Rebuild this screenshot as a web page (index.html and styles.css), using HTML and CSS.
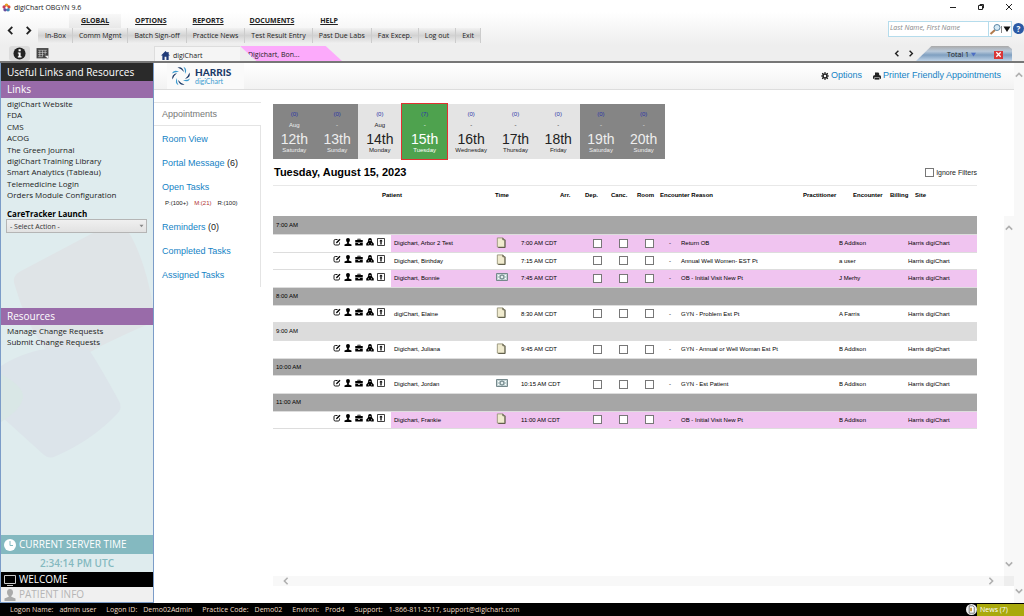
FILE: index.html
```html
<!DOCTYPE html>
<html lang="en">
  <head>
    <meta charset="UTF-8" />
    <meta name="viewport" content="width=device-width, initial-scale=1.0" />
    <title>digiChart OBGYN 9.6</title>
    <link rel="stylesheet" href="styles.css">
  </head>
  <body>
    <svg class="sprites" aria-hidden="true">
      <symbol id="i-edit" viewBox="0 0 16 16">
        <path d="M9 3H4.500Q2 3 2 5.500v6Q2 14 4.500 14h6q2.500 0 2.500-2.500V9" fill="none" stroke="currentColor" stroke-width="1.800" />
        <path d="M6.500 8l6.500-6.500 2 2L8.500 10 6 10.700z" fill="currentColor" />
      </symbol>
      <symbol id="i-person" viewBox="0 0 16 16">
        <path d="M8 0C5.500 0 4 1.800 4.200 4.500 4.400 6.500 5.200 8 6.300 8.800v2L1 13v3h14v-3l-5.300-2.200v-2C10.800 8 11.600 6.500 11.800 4.500 12 1.800 10.500 0 8 0z" fill="currentColor" />
      </symbol>
      <symbol id="i-case" viewBox="0 0 16 16">
        <path d="M5 4V1.500h6V4h4.500v5h-15V4zM6.500 4h3V3h-3zM.500 10H6v1.500h4V10h5.500v5H.500z" fill="currentColor" fill-rule="evenodd" />
      </symbol>
      <symbol id="i-group" viewBox="0 0 16 16">
        <path d="M8 0C5 0 4 2 4.300 6L2.500 9 .500 11v4h6L8 13.500 9.500 15h6v-4l-2-2-1.800-3C12 2 11 0 8 0z" fill="currentColor" />
        <path d="M6.500 4h1v2h-1zM8.500 4h1v2h-1zM4 11h2v1.500H4zM10 11h2v1.500h-2z" fill="#fff" />
      </symbol>
      <symbol id="i-task" viewBox="0 0 16 16">
        <path d="M1 1h14v14H1z" fill="#fff" stroke="currentColor" stroke-width="1.500" />
        <path d="M8 3l3.500 3.500H9.300V13H6.700V6.500H4.500z" fill="currentColor" />
      </symbol>
      <symbol id="i-note" viewBox="0 0 10 12">
        <path d="M1 1h6l2 2v8H1z" fill="#f0ebcf" stroke="#99977c" />
        <path d="M7 1v2h2M9.500 3v8.500H2" fill="none" stroke="#55543f" />
      </symbol>
      <symbol id="i-cash" viewBox="0 0 12 8">
        <path d="M.500 .500h11v7H.500z" fill="#c3d3d4" stroke="#76898c" />
        <path d="M2 2h1v1H2zM9 2h1v1H9zM2 5h1v1H2zM9 5h1v1H9z" fill="#fff" />
        <circle cx="6" cy="4" r="2" fill="#e6efef" stroke="#60777b" />
      </symbol>
      <symbol id="i-left" viewBox="0 0 10 10">
        <path d="M7 1L3 5l4 4" fill="none" stroke="currentColor" stroke-width="2" />
      </symbol>
      <symbol id="i-right" viewBox="0 0 10 10">
        <path d="M3 1l4 4-4 4" fill="none" stroke="currentColor" stroke-width="2" />
      </symbol>
      <symbol id="i-up" viewBox="0 0 10 10">
        <path d="M1 7l4-4 4 4" fill="none" stroke="currentColor" stroke-width="2" />
      </symbol>
      <symbol id="i-down" viewBox="0 0 10 10">
        <path d="M1 3l4 4 4-4" fill="none" stroke="currentColor" stroke-width="2" />
      </symbol>
    </svg>

    <header class="top">
      <div class="titlebar">
        <svg class="app-icon" viewBox="0 0 10 10">
          <circle cx="5" cy="2.500" r="2" fill="#e8a427" />
          <circle cx="2.500" cy="4.500" r="2" fill="#c8405c" />
          <circle cx="7.500" cy="4.500" r="2" fill="#d84a35" />
          <circle cx="3.500" cy="7.500" r="2" fill="#6a4b9c" />
          <circle cx="6.700" cy="7.500" r="2" fill="#3f86b8" />
          <circle cx="5" cy="5.200" r="1.300" fill="#fff" />
        </svg>
        <span class="app-name">digiChart OBGYN 9.6</span>
        <div class="window-buttons">
          <button aria-label="Minimize"><svg viewBox="0 0 8 8"><path d="M1 4.500h6" fill="none" stroke="#222" /></svg></button>
          <button aria-label="Restore"><svg viewBox="0 0 8 8"><path d="M1.500 2.500h4v4h-4zM3 2.500v-1h3.500V5H5.500" fill="none" stroke="#222" /></svg></button>
          <button aria-label="Close"><svg viewBox="0 0 8 8"><path d="M1 1l6 6M7 1L1 7" fill="none" stroke="#222" /></svg></button>
        </div>
      </div>

      <div class="ribbon">
        <div class="history">
          <button aria-label="Back"><svg><use href="#i-left" /></svg></button>
          <button aria-label="Forward"><svg><use href="#i-right" /></svg></button>
        </div>
        <div class="menus">
          <nav class="menu-main">
            <a class="active" href="#">GLOBAL</a>
            <a href="#">OPTIONS</a>
            <a href="#">REPORTS</a>
            <a href="#">DOCUMENTS</a>
            <a href="#">HELP</a>
          </nav>
          <nav class="menu-sub">
            <a href="#">In-Box</a>
            <a href="#">Comm Mgmt</a>
            <a href="#">Batch Sign-off</a>
            <a href="#">Practice News</a>
            <a href="#">Test Result Entry</a>
            <a href="#">Past Due Labs</a>
            <a href="#">Fax Excep.</a>
            <a href="#">Log out</a>
            <a href="#">Exit</a>
          </nav>
        </div>
        <form class="search">
          <input type="text" placeholder="Last Name, First Name" aria-label="Patient name" />
          <button type="button" aria-label="Search">
            <svg viewBox="0 0 22 12">
              <path d="M6 7L1.500 11" stroke="#b07a4c" stroke-width="2" />
              <circle cx="8" cy="4.500" r="3" fill="#d5eaf6" stroke="#5b87a6" />
              <path d="M12.500 3v7" stroke="#888" />
              <path d="M14.500 3.500h7L18 9z" fill="#111" />
            </svg>
          </button>
        </form>
        <button class="help" aria-label="Help">?</button>
      </div>

      <div class="tabs">
        <div class="tools">
          <button class="tool active" aria-label="Information">
            <svg viewBox="0 0 14 14">
              <circle cx="7" cy="7" r="6.500" fill="#222" />
              <path d="M6 2.500h2.300v2H6zM5.200 5.800h3v4.200h1v1.200H5.200V10h.900V7h-.900z" fill="#fff" />
            </svg>
          </button>
          <button class="tool" aria-label="Schedule">
            <svg viewBox="0 0 12 12">
              <path d="M.500 1h11v9.500H.500z" fill="#444" />
              <path d="M2 3h8M2 5h8M2 7h5M2 9h4M3.500 3v6M6 3v6M8.500 3v4" stroke="#ddd" stroke-width=".500" />
              <path d="M8 8h3.500v3z" fill="#eee" />
            </svg>
          </button>
        </div>
        <a class="tab tab-home" href="#">
          <svg viewBox="0 0 10 10"><path d="M5 0L0 5h1.500v5H4V6.500h2V10h2.500V5H10L8.500 3.500V1H7v1z" fill="#1f3a77" /></svg>
          digiChart
        </a>
        <a class="tab tab-patient" href="#">Digichart, Bon...</a>
        <div class="tab-arrows">
          <button aria-label="Previous tab"><svg><use href="#i-left" /></svg></button>
          <button aria-label="Next tab"><svg><use href="#i-right" /></svg></button>
        </div>
        <div class="tab-total">
          <span>Total 1</span>
          <svg class="caret" viewBox="0 0 6 6"><path d="M0 1h6L3 5.500z" fill="#4d6fc4" /></svg>
          <button class="close" aria-label="Close all tabs">
            <svg viewBox="0 0 8 8"><path d="M1.500 1.500l5 5M6.500 1.500l-5 5" stroke="#fff" stroke-width="1.500" /></svg>
          </button>
        </div>
      </div>
    </header>

    <div class="main">
      <aside class="sidebar">
        <svg class="petals" viewBox="0 0 152 400" preserveAspectRatio="xMinYMin slice">
          <path d="M14 80Q10 70 20 65L90 28Q122 14 130 30Q145 58 152 100V116Q120 130 100 140Q60 165 42 140Q24 115 14 80z" fill="#dfe4e7" />
          <path d="M0 160Q40 135 88 144Q96 155 118 195Q122 202 116 208Q90 235 55 250Q48 254 42 248L0 210z" fill="#dce4ea" />
          <path d="M0 168Q22 180 22 190Q22 202 0 216z" fill="#d9e7e6" />
        </svg>
        <h1>Useful Links and Resources</h1>
        <h2>Links</h2>
        <ul class="links">
          <li><a href="#">digiChart Website</a></li>
          <li><a href="#">FDA</a></li>
          <li><a href="#">CMS</a></li>
          <li><a href="#">ACOG</a></li>
          <li><a href="#">The Green Journal</a></li>
          <li><a href="#">digiChart Training Library</a></li>
          <li><a href="#">Smart Analytics (Tableau)</a></li>
          <li><a href="#">Telemedicine Login</a></li>
          <li><a href="#">Orders Module Configuration</a></li>
        </ul>
        <div class="launch">
          <label for="launch">CareTracker Launch</label>
          <div class="select">
            <select id="launch"><option>- Select Action -</option></select>
            <svg viewBox="0 0 6 6"><path d="M0 1h6L3 5z" fill="#888" /></svg>
          </div>
        </div>
        <h2>Resources</h2>
        <ul class="resources">
          <li><a href="#">Manage Change Requests</a></li>
          <li><a href="#">Submit Change Requests</a></li>
        </ul>
        <div class="panel panel-time">
          <svg viewBox="0 0 12 12"><circle cx="6" cy="6" r="6" fill="#fff" /><path d="M6 2v4.500h3" fill="none" stroke="#84b9c0" /></svg>
          CURRENT SERVER TIME
        </div>
        <div class="clock">2:34:14 PM UTC</div>
        <div class="panel panel-welcome">
          <svg viewBox="0 0 12 12"><path d="M.500 1.500h11v8H.500zM3 11.500h6" fill="none" stroke="#ccc" /></svg>
          WELCOME
        </div>
        <div class="panel panel-patient">
          <svg viewBox="0 0 12 12"><path d="M6 0C4 0 3 1.500 3 3.300 3 5 3.800 6.200 4.700 7v.800L.500 9.500V12h11V9.500L7.300 7.800V7C8.200 6.200 9 5 9 3.300 9 1.500 8 0 6 0z" fill="#aaa" /></svg>
          PATIENT INFO
        </div>
      </aside>

      <main class="content">
        <div class="brandbar">
          <div class="logo">
            <svg viewBox="0 0 20 20">
              <g id="swirl">
                <path d="M6.500 1.500Q11.500 0 13 6Q10.500 2.800 6.500 1.500z" fill="#1b3a68" />
                <path d="M12.500 .800Q17 3 14 8Q14.500 4 12.500 .800z" fill="#3c9bd0" />
              </g>
              <use href="#swirl" transform="rotate(90 10 10)" />
              <use href="#swirl" transform="rotate(180 10 10)" />
              <use href="#swirl" transform="rotate(270 10 10)" />
            </svg>
            <div class="logo-text"><strong>HARRIS</strong><span>digiChart</span></div>
          </div>
          <div class="actions">
            <a href="#">
              <svg viewBox="0 0 10 10"><circle cx="5" cy="5" r="2.500" fill="none" stroke="#222" stroke-width="2" /><path d="M5 0v2M5 8v2M0 5h2M8 5h2M1.500 1.500l1.300 1.300M7.200 7.200l1.300 1.300M8.500 1.500L7.200 2.800M2.800 7.200L1.500 8.500" stroke="#222" stroke-width="1.500" /></svg>
              Options
            </a>
            <a href="#">
              <svg viewBox="0 0 10 10"><path d="M2.500 4V.500h4.200L7.700 2v2H9L10 5.500V8.500H8.500V7h-7v1.500H0v-3L1 4z" fill="#222" /><path d="M2 7.500h6v2H2z" fill="#222" /></svg>
              Printer Friendly Appointments
            </a>
          </div>
        </div>

        <div class="workspace">
          <nav class="sidenav">
            <div class="current">Appointments</div>
            <ul>
              <li><a href="#">Room View</a></li>
              <li><a href="#">Portal Message</a> (6)</li>
              <li><a href="#">Open Tasks</a></li>
              <li class="counts"><span>P:(100+)</span><span class="red">M:(21)</span><span>R:(100)</span></li>
              <li><a href="#">Reminders</a> (0)</li>
              <li><a href="#">Completed Tasks</a></li>
              <li><a href="#">Assigned Tasks</a></li>
            </ul>
          </nav>

          <section class="schedule">
            <div class="days">
              <a class="day weekend" href="#"><i>(0)</i><small>Aug</small><b>12th</b><span>Saturday</span></a>
              <a class="day weekend" href="#"><i>(0)</i><small>-</small><b>13th</b><span>Sunday</span></a>
              <a class="day" href="#"><i>(0)</i><small>Aug</small><b>14th</b><span>Monday</span></a>
              <a class="day today" href="#"><i>(7)</i><small>-</small><b>15th</b><span>Tuesday</span></a>
              <a class="day wide" href="#"><i>(0)</i><small>-</small><b>16th</b><span>Wednesday</span></a>
              <a class="day" href="#"><i>(0)</i><small>-</small><b>17th</b><span>Thursday</span></a>
              <a class="day" href="#"><i>(0)</i><small>-</small><b>18th</b><span>Friday</span></a>
              <a class="day weekend" href="#"><i>(0)</i><small>-</small><b>19th</b><span>Saturday</span></a>
              <a class="day weekend" href="#"><i>(0)</i><small>-</small><b>20th</b><span>Sunday</span></a>
            </div>
            <div class="date-row">
              <h3>Tuesday, August 15, 2023</h3>
              <label class="filters"><input type="checkbox" />Ignore Filters</label>
            </div>
            <div class="scroller">
              <table class="appts">
                <colgroup>
                  <col class="c-actions"><col class="c-name"><col class="c-doc"><col class="c-time"><col class="c-arr">
                  <col class="c-check"><col class="c-check"><col class="c-room"><col class="c-dash"><col>
                  <col class="c-prac"><col class="c-enc"><col class="c-bill"><col class="c-site">
                </colgroup>
                <thead>
                  <tr>
                    <th class="patient" colspan="2">Patient</th>
                    <th colspan="2">Time</th>
                    <th>Arr.</th>
                    <th>Dep.</th>
                    <th>Canc.</th>
                    <th>Room</th>
                    <th colspan="2">Encounter Reason</th>
                    <th>Practitioner</th>
                    <th>Encounter</th>
                    <th>Billing</th>
                    <th class="site">Site</th>
                  </tr>
                </thead>
                <tbody id="appointments"></tbody>
              </table>
              <div class="vbar"><svg><use href="#i-up" /></svg><svg><use href="#i-down" /></svg></div>
              <div class="hbar"><svg><use href="#i-left" /></svg><svg><use href="#i-right" /></svg></div>
              <div class="corner"></div>
            </div>
          </section>
        </div>
      </main>
      <div class="vbar page-bar"><svg><use href="#i-up" /></svg><svg><use href="#i-down" /></svg></div>
    </div>

    <footer class="statusbar">
      <dl>
        <div><dt>Logon Name:</dt><dd>admin user</dd></div>
        <div><dt>Logon ID:</dt><dd>Demo02Admin</dd></div>
        <div><dt>Practice Code:</dt><dd>Demo02</dd></div>
        <div><dt>Environ:</dt><dd>Prod4</dd></div>
        <div><dt>Support:</dt><dd>1-866-811-5217, support@digichart.com</dd></div>
      </dl>
      <a class="news" href="#">
        <svg viewBox="0 0 12 12"><circle cx="6" cy="6" r="6" fill="#eee" /><path d="M3.500 2h4L9 3.500V10H3.500z" fill="#fff" stroke="#555" stroke-width=".800" /><path d="M4.500 4h2v4h-2z" fill="#c89a3c" /></svg>
        <span>News (7)</span>
      </a>
    </footer>

    <script>
      const schedule = [
        { hour: '7:00 AM' },
        { name: 'Digichart, Arbor 2 Test', icon: 'note', time: '7:00 AM CDT', reason: 'Return OB', by: 'B Addison', ob: true },
        { name: 'Digichart, Birthday', icon: 'note', time: '7:15 AM CDT', reason: 'Annual Well Women- EST Pt', by: 'a user' },
        { name: 'Digichart, Bonnie', icon: 'cash', time: '7:45 AM CDT', reason: 'OB - Initial Visit New Pt', by: 'J Merhy', ob: true },
        { hour: '8:00 AM' },
        { name: 'digiChart, Elaine', icon: 'note', time: '8:30 AM CDT', reason: 'GYN - Problem Est Pt', by: 'A Farris' },
        { hour: '9:00 AM', light: true },
        { name: 'Digichart, Juliana', icon: 'note', time: '9:45 AM CDT', reason: 'GYN - Annual or Well Woman Est Pt', by: 'B Addison' },
        { hour: '10:00 AM' },
        { name: 'Digichart, Jordan', icon: 'cash', time: '10:15 AM CDT', reason: 'GYN - Est Patient', by: 'B Addison' },
        { hour: '11:00 AM' },
        { name: 'Digichart, Frankie', icon: 'note', time: '11:00 AM CDT', reason: 'OB - Initial Visit New Pt', by: 'B Addison', ob: true },
      ];

      const actions = ['edit', 'person', 'case', 'group', 'task']
        .map((name) => `<button aria-label="${name}"><svg><use href="#i-${name}" /></svg></button>`)
        .join('');

      const checkbox = (label, row) =>
        `<td class="check"><input type="checkbox" aria-label="${label} ${row.name}" /></td>`;

      document.getElementById('appointments').innerHTML = schedule
        .map((row) => {
          if (row.hour) {
            return `<tr class="hour${row.light ? ' light' : ''}"><td colspan="14">${row.hour}</td></tr>`;
          }
          return `<tr class="appt${row.ob ? ' ob' : ''}">
            <td class="row-actions"><div>${actions}</div></td>
            <td>${row.name}</td>
            <td class="doc"><svg class="${row.icon}"><use href="#i-${row.icon}" /></svg></td>
            <td class="time" colspan="2">${row.time}</td>
            ${checkbox('Departed', row)}${checkbox('Cancelled', row)}${checkbox('Roomed', row)}
            <td class="dash">-</td>
            <td>${row.reason}</td>
            <td class="by" colspan="2">${row.by}</td>
            <td></td>
            <td class="place">Harris digiChart</td>
          </tr>`;
        })
        .join('');
    </script>
  </body>
</html>
```
FILE: styles.css
```css
* {
  box-sizing: border-box;
}
body {
  display: flex;
  flex-direction: column;
  min-height: 100vh;
  margin: 0;
  background: #fff;
  color: #222;
  font-family: 'Open Sans', 'Noto Sans', sans-serif;
  font-size: 8px;
  line-height: 11px;
}
h1,
h2,
h3,
ul,
dl,
dd {
  margin: 0;
  padding: 0;
  font-weight: normal;
}
ul {
  list-style: none;
}
a {
  color: inherit;
  text-decoration: none;
}
button {
  display: flex;
  align-items: center;
  justify-content: center;
  padding: 0;
  border: 0;
  background: none;
  color: inherit;
  font: inherit;
}
svg {
  display: block;
  flex: none;
}
.sprites {
  display: none;
}

/* top bar */
.top {
  height: 63px;
  border-bottom: 2px solid #777;
  background: linear-gradient(#fff 20%, #eee 75%);
}
.titlebar {
  display: flex;
  align-items: center;
  height: 14px;
  padding: 0 11px 0 2px;
  font-size: 7px;
}
.app-icon {
  width: 9px;
  height: 9px;
  margin-right: 3px;
}
.window-buttons {
  display: flex;
  gap: 20px;
  margin-left: auto;
}
.window-buttons svg {
  width: 8px;
  height: 8px;
}
.ribbon {
  display: flex;
  height: 32px;
}
.history {
  display: flex;
  align-items: center;
  width: 38px;
  padding-left: 5px;
  gap: 7px;
}
.history svg {
  width: 11px;
  height: 9px;
}
.menu-main {
  display: flex;
  height: 14px;
  padding-left: 31px;
  gap: 2px;
  font-size: 7px;
  font-weight: bold;
  line-height: 13px;
}
.menu-main a {
  padding: 0 12px;
  text-decoration: underline;
}
.menu-main .active {
  background: linear-gradient(#f8f8f8, #e8e8e8);
}
.menu-sub {
  display: flex;
  height: 15px;
  padding-left: 1px;
  font-size: 7px;
  line-height: 15px;
  background: linear-gradient(#f2f2f2, #d2d2d2 50%, #eee);
}
.menu-sub a {
  padding: 0 6px;
  border-right: 1px solid #ccc;
}
.search {
  display: flex;
  width: 124px;
  height: 16px;
  margin: 7px 1px 0 auto;
  border: 1px solid #b5dcec;
  background: #fff;
}
.search input {
  flex: 1;
  min-width: 0;
  padding: 0 1px 4px;
  border: 0;
  border-right: 1px solid #b5dcec;
  background: none;
  font: italic 7px 'Open Sans', sans-serif;
}
.search input::placeholder {
  color: #888;
}
.search svg {
  width: 22px;
  height: 12px;
}
.help {
  width: 11px;
  height: 11px;
  margin-top: 9px;
  border-radius: 50%;
  background: #2c5aa5;
  color: #fff;
  font-size: 8px;
  font-weight: bold;
}
.tabs {
  display: flex;
  height: 15px;
}
.tools {
  display: flex;
  width: 154px;
  padding-left: 9px;
  gap: 2px;
}
.tool {
  width: 21px;
  border-radius: 3px;
}
.tool.active {
  background: #dcdcdc;
}
.tool svg {
  width: 13px;
  height: 13px;
}
.tab {
  display: flex;
  align-items: center;
  padding-top: 2px;
  font-size: 7px;
}
.tab-home {
  width: 86px;
  padding-left: 6px;
  gap: 3px;
  border: 1px solid #ddd;
  border-width: 1px 0 0 1px;
  background: #f5f5f5;
}
.tab-home svg {
  width: 9px;
  height: 9px;
}
.tab-patient {
  width: 102px;
  padding-left: 8px;
  background: #fcaafb;
  clip-path: polygon(0 0, 84% 0, 100% 100%, 16% 100%);
}
.tab-arrows {
  display: flex;
  gap: 6px;
  margin-left: auto;
}
.tab-arrows svg {
  width: 8px;
  height: 7px;
}
.tab-total {
  display: flex;
  align-items: center;
  width: 96px;
  margin: 0 12px 0 1px;
  padding: 2px 0 0 31px;
  font-size: 7px;
  background: linear-gradient(#a9a9a9, #b9c9da 35%, #7f9fc0 60%, #c0d4e8);
  clip-path: polygon(16% 0, 96% 0, 100% 20%, 100% 100%, 0 100%);
}
.caret {
  width: 5px;
  height: 5px;
  margin-left: 2px;
}
.close {
  width: 9px;
  height: 8px;
  margin: 0 9px 0 auto;
  background: #d93636;
}
.close svg {
  width: 7px;
  height: 7px;
}

.main {
  display: flex;
  flex: 1;
}

/* left panel */
.sidebar {
  position: relative;
  display: flex;
  flex-direction: column;
  width: 154px;
  border: 1px solid #7b9cc8;
  border-top: 0;
  background: #dfecee;
}
.petals {
  position: absolute;
  top: 143px;
  left: 0;
  width: 100%;
  height: 400px;
}
.sidebar > :not(.petals) {
  position: relative;
}
.sidebar h1 {
  height: 18px;
  padding-left: 6px;
  background: #2a2a2a;
  color: #fff;
  font-size: 10px;
  line-height: 18px;
}
.sidebar h2 {
  height: 17px;
  padding-left: 6px;
  background: #996ba9;
  color: #fff;
  font-size: 10px;
  line-height: 17px;
}
.links {
  display: flex;
  flex-direction: column;
  justify-content: space-between;
  height: 102px;
  padding-left: 6px;
}
.launch {
  height: 108px;
  padding: 8px 6px 0 5px;
}
.launch label {
  display: block;
  padding-left: 1px;
  font-weight: bold;
  color: #000;
}
.select {
  position: relative;
}
.select select {
  display: block;
  width: 100%;
  height: 14px;
  padding: 0 3px;
  border: 1px solid #b5b5b5;
  border-radius: 0;
  background: linear-gradient(#f0f0f0, #e2e2e2);
  color: #333;
  font: 7px 'Open Sans', sans-serif;
  appearance: none;
}
.select svg {
  position: absolute;
  top: 5px;
  right: 3px;
  width: 5px;
  height: 4px;
}
.resources {
  flex: 1;
  padding-left: 6px;
}
.panel {
  display: flex;
  align-items: center;
  height: 15px;
  padding-left: 3px;
  gap: 3px;
  color: #fff;
  font-size: 10px;
}
.panel svg {
  width: 12px;
  height: 12px;
}
.panel-time {
  height: 19px;
  background: #84b9c0;
}
.clock {
  height: 18px;
  color: #84b9c0;
  font-size: 10px;
  font-weight: 600;
  line-height: 19px;
  text-align: center;
}
.panel-welcome {
  background: #000;
}
.panel-patient {
  background: #f0f0f0;
  color: #b5b5b5;
}

/* content */
.content {
  display: flex;
  flex: 1;
  flex-direction: column;
  min-width: 0;
  font-family: 'Liberation Sans', Arial, sans-serif;
}
.brandbar {
  display: flex;
  align-items: center;
  justify-content: space-between;
  height: 27px;
  padding: 0 13px;
  border-bottom: 1px solid #ddd;
  background: linear-gradient(#fff, #f2f2f2);
}
.logo {
  display: flex;
  align-items: center;
  width: 77px;
  height: 100%;
  padding-left: 4px;
  gap: 4px;
  background: #fafafa;
}
.logo svg {
  width: 20px;
  height: 20px;
}
.logo-text {
  display: flex;
  flex-direction: column;
  color: #1b3a68;
  font-family: Lato, sans-serif;
  font-size: 10px;
  line-height: 9px;
}
.logo-text strong {
  font-weight: 900;
}
.logo-text span {
  color: #3c9bd0;
  font-size: 7px;
  line-height: 8px;
}
.actions {
  display: flex;
  gap: 11px;
  padding-bottom: 1px;
  font-size: 9px;
  color: #1583c5;
}
.actions a {
  display: flex;
  align-items: center;
  gap: 2px;
}
.actions svg {
  width: 8px;
  height: 8px;
}
.workspace {
  display: flex;
  flex: 1;
}
.sidenav {
  width: 107px;
  margin: 12px 12px 0 0;
  font-size: 9px;
}
.sidenav .current {
  height: 24px;
  padding-left: 8px;
  border: 1px solid #e4e4e4;
  border-width: 1px 0;
  color: #777;
  line-height: 23px;
}
.sidenav ul {
  padding: 1px 0 0 8px;
  border-right: 1px solid #e4e4e4;
}
.sidenav li {
  line-height: 24px;
}
.sidenav a {
  color: #1583c5;
}
.sidenav .counts {
  display: flex;
  gap: 6px;
  height: 16px;
  padding-left: 3px;
  font-size: 6px;
  line-height: 8px;
}
.counts .red {
  color: #b03030;
}
.schedule {
  display: flex;
  flex: 1;
  flex-direction: column;
  min-width: 0;
  padding: 14px 0 17px;
}
.days {
  display: flex;
  width: 392px;
}
.day {
  display: flex;
  flex: 1;
  flex-direction: column;
  align-items: center;
  height: 55px;
  padding-top: 6px;
  background: #e4e4e4;
  font-size: 6px;
  line-height: 9px;
}
.day.weekend {
  background: #858585;
  color: #eee;
}
.day.wide {
  flex: none;
  width: 46px;
}
.day.today {
  flex: none;
  width: 47px;
  height: 57px;
  margin: -1px 0;
  border: 1px solid #e23030;
  background: #4ea24e;
  color: #fff;
}
.day i {
  color: #2b35a8;
  font-style: normal;
}
.day small {
  font-size: 6px;
  line-height: 12px;
}
.day b {
  font-size: 14px;
  font-weight: normal;
  line-height: 16px;
}
.day span {
  line-height: 7px;
}
.date-row {
  display: flex;
  align-items: center;
  justify-content: space-between;
  height: 27px;
  margin-right: 37px;
  padding-left: 1px;
  border-bottom: 1px solid #e8e8e8;
}
.date-row h3 {
  color: #000;
  font-size: 11px;
  font-weight: bold;
}
.filters {
  display: flex;
  align-items: center;
  gap: 2px;
  font-size: 7px;
}
input[type='checkbox'] {
  display: block;
  width: 9px;
  height: 9px;
  margin: 0;
  border: 1px solid #777;
  background: #fff;
  appearance: none;
}
.scroller {
  display: grid;
  flex: 1;
  grid-template-columns: 1fr 10px;
  grid-template-rows: 1fr 10px;
}
.vbar,
.hbar {
  display: flex;
  justify-content: space-between;
  background: #f8f8f8;
  color: #b0b0b0;
}
.vbar {
  flex-direction: column;
  align-items: center;
  width: 10px;
  margin-top: 30px;
  padding: 8px 0;
}
.hbar {
  align-items: center;
  padding: 0 9px;
}
.vbar svg,
.hbar svg {
  width: 8px;
  height: 8px;
}
.corner {
  background: #eee;
}
.page-bar {
  margin-top: 0;
}

/* appointment list */
.appts {
  align-self: start;
  width: calc(100% - 27px);
  border-collapse: collapse;
  table-layout: fixed;
  color: #000;
  font-size: 6px;
  line-height: 8px;
}
.c-actions { width: 118px; }
.c-name { width: 102px; }
.c-doc { width: 25px; }
.c-time { width: 40px; }
.c-arr { width: 25px; }
.c-check { width: 26px; }
.c-room { width: 23px; }
.c-dash { width: 20px; }
.c-prac { width: 50px; }
.c-enc { width: 37px; }
.c-bill { width: 18px; }
.c-site { width: 71px; }
.appts th,
.appts td {
  padding: 0 2px;
  text-align: left;
  white-space: nowrap;
}
.appts td {
  padding-left: 3px;
}
.appts th {
  height: 30px;
  padding-top: 5px;
  vertical-align: top;
}
.appts .patient {
  padding-left: 109px;
}
.appts .site {
  padding-left: 9px;
}
.appts tbody tr {
  height: 18px;
}
.appts tbody tr:nth-child(3n) {
  height: 17px;
}
.hour td {
  border-bottom: 1px solid #ddd;
  background: #a6a6a6;
}
.hour.light td {
  background: #dcdcdc;
}
.appt td {
  border-bottom: 1px solid #ddd;
}
.ob td {
  background: #f0c4f0;
}
.appts .row-actions {
  padding: 0 6px 3px 0;
  background: #fff;
}
.row-actions div {
  display: flex;
  justify-content: flex-end;
  gap: 3px;
}
.row-actions svg {
  width: 8px;
  height: 8px;
}
.appts .check {
  padding-left: 10px;
}
.appts .doc {
  padding-bottom: 2px;
}
.note {
  width: 10px;
  height: 11px;
}
.cash {
  width: 12px;
  height: 8px;
}
.appts .dash {
  padding-left: 11px;
}
.appts .by {
  padding-left: 38px;
}
.appts .place {
  padding-left: 2px;
}

/* status bar */
.statusbar {
  display: flex;
  align-items: center;
  height: 13px;
  background: #000;
  color: #f0dfc8;
  font-size: 7px;
}
.statusbar dl {
  display: flex;
  gap: 10px;
  padding-left: 10px;
}
.statusbar dl div {
  display: flex;
  gap: 6px;
}
.news {
  display: flex;
  align-items: center;
  width: 58px;
  height: 100%;
  margin-left: auto;
  color: #fff;
}
.news svg {
  width: 11px;
  height: 11px;
}
.news span {
  flex: 1;
  padding-left: 3px;
  background: #a9a90c;
  line-height: 12px;
}
```
